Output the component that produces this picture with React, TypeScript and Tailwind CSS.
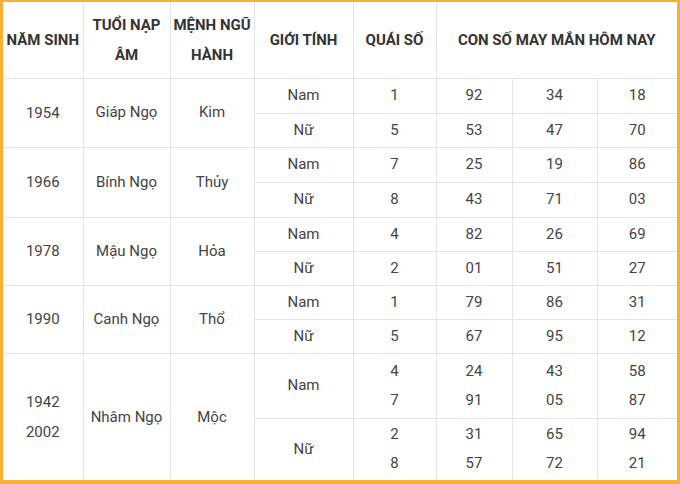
import React from "react";

type Group = {
  years: string[];
  napAm: string;
  menh: string;
  rows: { gender: string; quai: string[]; nums: string[][] }[];
  tall?: boolean;
};

const GROUPS: Group[] = [
  {
    years: ["1954"],
    napAm: "Giáp Ngọ",
    menh: "Kim",
    rows: [
      { gender: "Nam", quai: ["1"], nums: [["92", "34", "18"]] },
      { gender: "Nữ", quai: ["5"], nums: [["53", "47", "70"]] },
    ],
  },
  {
    years: ["1966"],
    napAm: "Bính Ngọ",
    menh: "Thủy",
    rows: [
      { gender: "Nam", quai: ["7"], nums: [["25", "19", "86"]] },
      { gender: "Nữ", quai: ["8"], nums: [["43", "71", "03"]] },
    ],
  },
  {
    years: ["1978"],
    napAm: "Mậu Ngọ",
    menh: "Hỏa",
    rows: [
      { gender: "Nam", quai: ["4"], nums: [["82", "26", "69"]] },
      { gender: "Nữ", quai: ["2"], nums: [["01", "51", "27"]] },
    ],
  },
  {
    years: ["1990"],
    napAm: "Canh Ngọ",
    menh: "Thổ",
    rows: [
      { gender: "Nam", quai: ["1"], nums: [["79", "86", "31"]] },
      { gender: "Nữ", quai: ["5"], nums: [["67", "95", "12"]] },
    ],
  },
  {
    years: ["1942", "2002"],
    napAm: "Nhâm Ngọ",
    menh: "Mộc",
    tall: true,
    rows: [
      {
        gender: "Nam",
        quai: ["4", "7"],
        nums: [
          ["24", "43", "58"],
          ["91", "05", "87"],
        ],
      },
      {
        gender: "Nữ",
        quai: ["2", "8"],
        nums: [
          ["31", "65", "94"],
          ["57", "72", "21"],
        ],
      },
    ],
  },
];

const cell = "border border-[#e4e4e6] text-center align-middle p-0";

function Lines({ items }: { items: string[] }) {
  return (
    <div className="flex flex-col items-center leading-[29px]">
      {items.map((t, i) => (
        <span key={i}>{t}</span>
      ))}
    </div>
  );
}

export default function App() {
  return (
    <div className="w-[680px] h-[484px] bg-white overflow-hidden">
      <div
        className="w-[680px] h-[484px] border-l-[3px] border-r-[3px] border-t-2 border-b-4 border-[#f8b233] bg-white"
        style={{ fontFamily: "Roboto, 'Liberation Sans', sans-serif" }}
      >
        <table className="table-fixed border-collapse w-[674px] text-[15px] text-[#444] border-hidden">
          <colgroup>
            <col className="w-[80px]" />
            <col className="w-[87px]" />
            <col className="w-[84px]" />
            <col className="w-[99px]" />
            <col className="w-[83px]" />
            <col className="w-[76px]" />
            <col className="w-[85px]" />
            <col className="w-[80px]" />
          </colgroup>
          <thead>
            <tr className="h-[76px] font-bold text-[#333] leading-[30px]">
              <th className={cell}>NĂM SINH</th>
              <th className={cell}>
                TUỔI NẠP
                <br />
                ÂM
              </th>
              <th className={cell}>
                MỆNH NGŨ
                <br />
                HÀNH
              </th>
              <th className={cell}>GIỚI TÍNH</th>
              <th className={cell}>QUÁI SỐ</th>
              <th className={cell} colSpan={3}>
                CON SỐ MAY MẮN HÔM NAY
              </th>
            </tr>
          </thead>
          <tbody>
            {GROUPS.map((g, gi) =>
              g.rows.map((r, ri) => {
                const h = g.tall
                  ? ri === 0
                    ? "h-[65px]"
                    : "h-[62px]"
                  : gi === 0 && ri === 0
                    ? "h-[35px]"
                    : gi === 1
                      ? "h-[35px]"
                      : "h-[34px]";
                return (
                  <tr key={`${gi}-${ri}`} className={h}>
                    {ri === 0 && (
                      <>
                        <td className={cell} rowSpan={2}>
                          <div className="flex flex-col items-center leading-[30px]">
                            {g.years.map((y) => (
                              <span key={y}>{y}</span>
                            ))}
                          </div>
                        </td>
                        <td className={cell} rowSpan={2}>
                          {g.napAm}
                        </td>
                        <td className={cell} rowSpan={2}>
                          {g.menh}
                        </td>
                      </>
                    )}
                    <td className={cell}>{r.gender}</td>
                    <td className={cell}>
                      <Lines items={r.quai} />
                    </td>
                    {[0, 1, 2].map((c) => (
                      <td key={c} className={cell}>
                        <Lines items={r.nums.map((n) => n[c])} />
                      </td>
                    ))}
                  </tr>
                );
              }),
            )}
          </tbody>
        </table>
      </div>
    </div>
  );
}
